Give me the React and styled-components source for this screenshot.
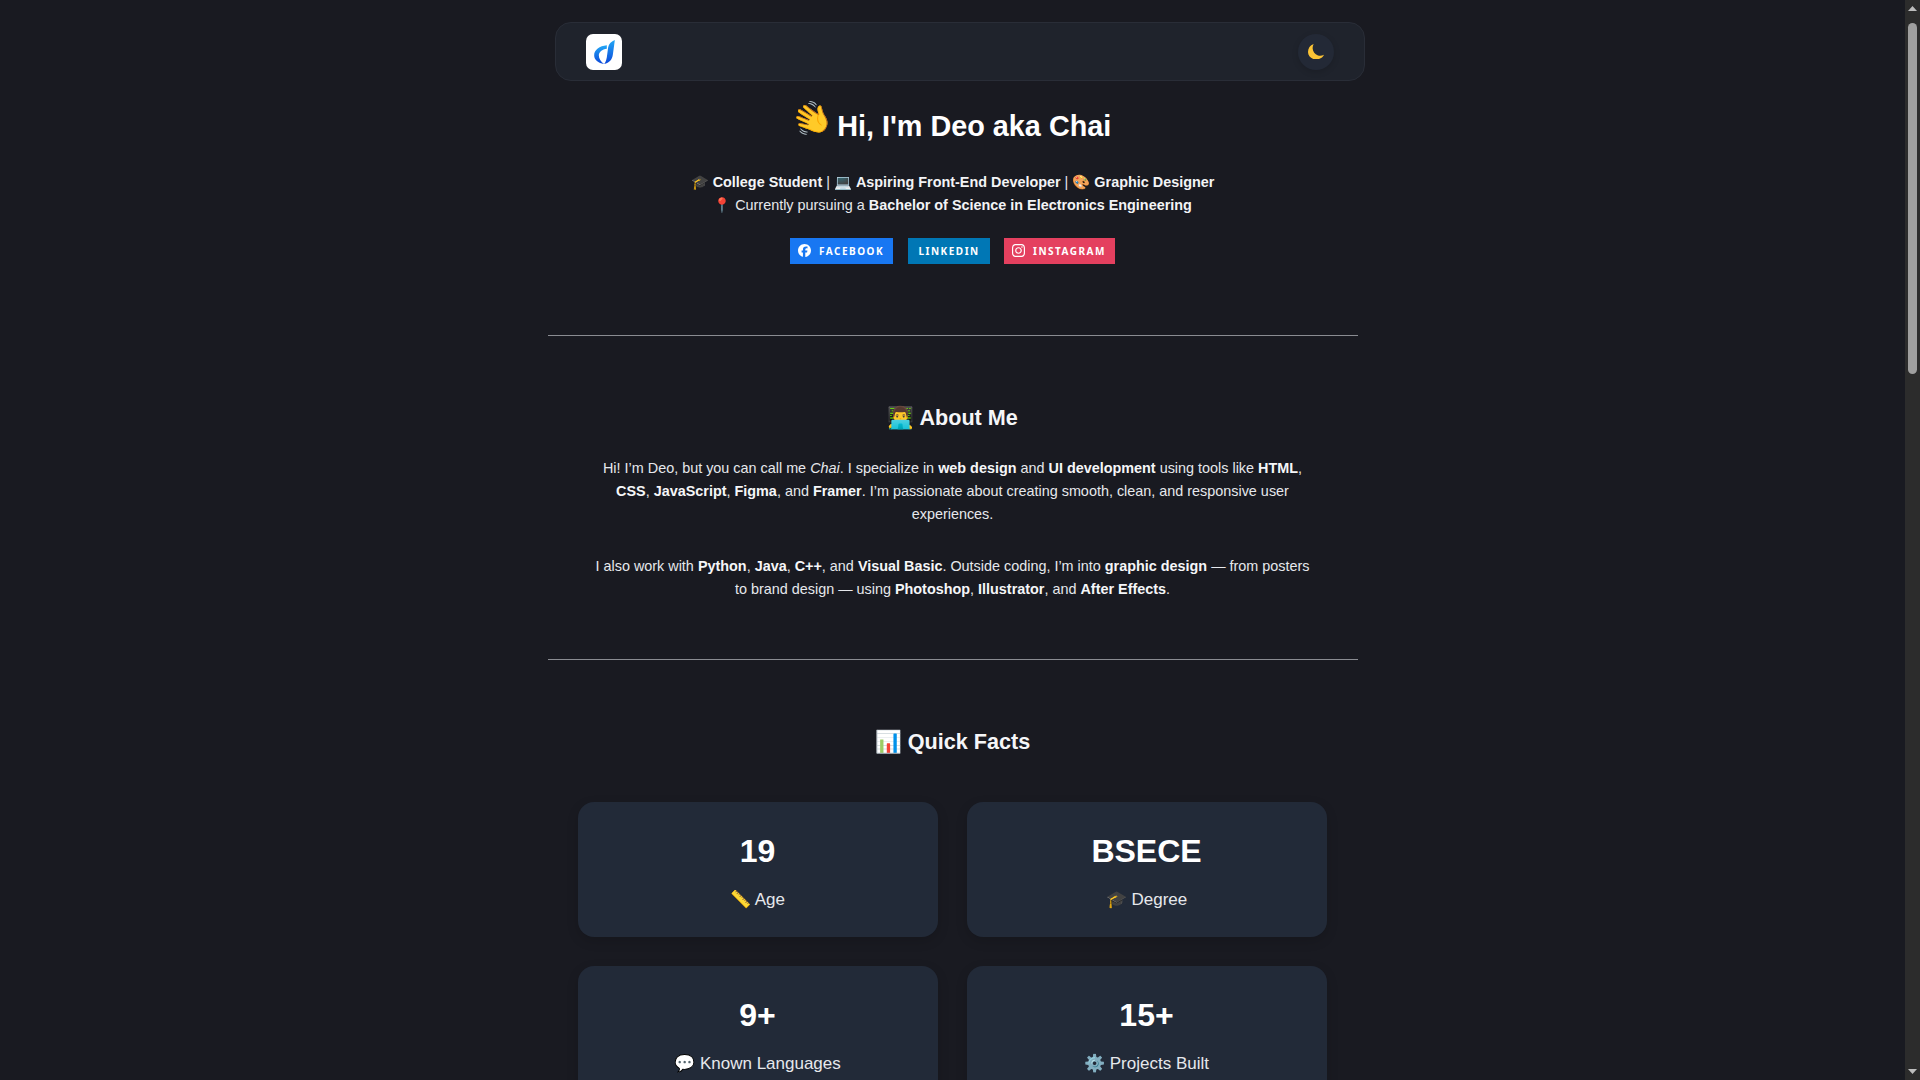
import React from 'react'
import styled, { createGlobalStyle } from 'styled-components'
import { SiFacebook, SiInstagram } from 'react-icons/si'

const Global = createGlobalStyle`
  body {
    margin: 0;
    background: #191a21;
    color: #f0f2f5;
    font-family: "Liberation Sans", Arial, sans-serif;
  }
`

const Page = styled.div`
  box-sizing: border-box;
  min-height: 3190px;
  padding-right: 15px;
  display: flex;
  flex-direction: column;
  align-items: center;
`

// the browser's own scrollbar doesn't show up in the photo, so it's drawn here
const ScrollBar = styled.div`
  position: fixed;
  top: 0;
  right: 0;
  bottom: 0;
  width: 15px;
  background: #2c2c2c;
`

const ScrollThumb = styled.div`
  position: absolute;
  top: 23px;
  left: 3px;
  width: 9px;
  height: 351px;
  border-radius: 5px;
  background: #9f9f9f;
`

const ScrollArrow = styled.svg`
  position: absolute;
  left: 3px;
  ${p => (p.$down ? 'bottom: 6px;' : 'top: 6px;')}
`

const Shell = styled.div`
  width: 810px;
`

const Nav = styled.nav`
  box-sizing: border-box;
  width: 810px;
  height: 59px;
  margin: 22px 0 0 7.5px;
  padding: 0 30px;
  display: flex;
  align-items: center;
  justify-content: space-between;
  background: #1f232c;
  border: 1px solid #292d37;
  border-radius: 16px;
`

const Logo = styled.div`
  width: 36px;
  height: 36px;
  border-radius: 7px;
  background: #fff;
  display: flex;
  align-items: center;
  justify-content: center;
`

const ThemeButton = styled.button`
  width: 36px;
  height: 36px;
  padding: 0;
  border: 0;
  border-radius: 50%;
  background: #232936;
  box-shadow: 0 2px 6px rgba(0, 0, 0, 0.15);
  display: flex;
  align-items: center;
  justify-content: center;
`

const Header = styled.header`
  text-align: center;
`

const Title = styled.h1`
  margin: 22px 0 0;
  padding-right: 2.5px;
  font-size: 28.8px;
  line-height: 44px;
  font-weight: 700;
  color: #fff;
`

const Wave = styled.span`
  display: inline-block;
  font-size: 32px;
  margin-right: -2px;
  position: relative;
  top: -6px;
  transform: rotate(-28deg);
`

const Intro = styled.p`
  margin: 23px 0 0;
  font-size: 14.4px;
  line-height: 23px;
  color: #e6e8ec;
  & b { color: #f3f4f6; }
`

const Badges = styled.div`
  margin-top: 21px;
  display: flex;
  justify-content: center;
  gap: 14.5px;
`

const Badge = styled.a`
  box-sizing: border-box;
  width: ${p => p.$width}px;
  height: 26px;
  padding: 0 0 1px ${p => p.$pad}px;
  display: flex;
  align-items: center;
  gap: 8px;
  background: ${p => p.$bg};
  color: #fff;
  font-family: "Noto Sans", sans-serif;
  font-size: 10px;
  font-weight: 700;
  letter-spacing: 1.5px;
`

const Rule = styled.hr`
  margin: ${p => p.$top}px 0 0;
  border: 0;
  border-top: 1px solid #8a8c92;
`

const Section = styled.section`
  text-align: center;
`

const Heading = styled.h2`
  margin: ${p => p.$top}px 0 0;
  font-size: 21.6px;
  line-height: 32px;
  font-weight: 700;
  color: #f5f6f8;
`

const Para = styled.p`
  margin: ${p => p.$top}px auto 0;
  width: 720px;
  font-size: 14.4px;
  line-height: 23px;
  color: #e6e8ec;
  & b { color: #f5f6f8; }
`

const Facts = styled.div`
  margin: 44px 0 0 30px;
  width: 749px;
  display: grid;
  grid-template-columns: 1fr 1fr;
  gap: 29px;
`

const Fact = styled.div`
  height: 135px;
  padding-top: 31px;
  box-sizing: border-box;
  background: #222a38;
  border-radius: 16px;
  box-shadow: 0 4px 12px rgba(0, 0, 0, 0.15);
  text-align: center;
`

const FactValue = styled.div`
  font-size: 32px;
  line-height: 37px;
  font-weight: 700;
  color: #fff;
`

const FactLabel = styled.div`
  margin-top: 17px;
  font-size: 17px;
  line-height: 26px;
  color: #e6e8ec;
`

const facts = [
  { value: '19', label: '📏 Age' },
  { value: 'BSECE', label: '🎓 Degree' },
  { value: '9+', label: '💬 Known Languages' },
  { value: '15+', label: '⚙️ Projects Built' },
]

export default function App() {
  return (
    <Page>
      <Global />
      <ScrollBar>
        <ScrollArrow width="9" height="5" viewBox="0 0 9 5"><path d="M4.500 0L9 5H0z" fill="#bdbdbd" /></ScrollArrow>
        <ScrollThumb />
        <ScrollArrow $down width="9" height="5" viewBox="0 0 9 5"><path d="M0 0h9L4.500 5z" fill="#bdbdbd" /></ScrollArrow>
      </ScrollBar>
      <Shell>
        <Nav>
          <Logo>
            <svg width="21" height="24" viewBox="0 0 62 72">
              <defs>
                <linearGradient id="logoGrad" x1="0" y1="0" x2="0" y2="1">
                  <stop offset="0" stopColor="#22a7f5" />
                  <stop offset="1" stopColor="#0b47d9" />
                </linearGradient>
              </defs>
              <path d="M38 16C16 18 0 30 0 46c0 14 12 24 30 26-10-6-16-16-16-26 0-10 10-18 24-20z" fill="url(#logoGrad)" />
              <path d="M62 0C52 4 44 10 42 22l-4 30c-2 10-4 16-8 20 16-4 24-14 26-28z" fill="url(#logoGrad)" />
            </svg>
          </Logo>
          <ThemeButton aria-label="theme">
            <svg width="16" height="15.500" viewBox="0 0 48 46">
              <path d="M17 0C6 4 0 13 0 24c0 12 10 22 24 22 11 0 20-5 24-14-6 3-12 4-18 2-10-3-15-12-16-20 0-6 1-10 3-14z" fill="#fcc435" />
            </svg>
          </ThemeButton>
        </Nav>

        <Header>
          <Title><Wave>👋</Wave> Hi, I'm Deo aka Chai</Title>
          <Intro>
            🎓 <b>College Student</b> | 💻 <b>Aspiring Front-End Developer</b> | 🎨 <b>Graphic Designer</b>
            <br />
            📍 Currently pursuing a <b>Bachelor of Science in Electronics Engineering</b>
          </Intro>
          <Badges>
            <Badge $bg="#1877f2" $width={103} $pad={8}><SiFacebook size={13} /> FACEBOOK</Badge>
            <Badge $bg="#0077b5" $width={82} $pad={11}>LINKEDIN</Badge>
            <Badge $bg="#e4405f" $width={111} $pad={8}><SiInstagram size={13} /> INSTAGRAM</Badge>
          </Badges>
        </Header>

        <Rule $top={71} />

        <Section>
          <Heading $top={66}>👨‍💻 About Me</Heading>
          <Para $top={23}>
            Hi! I’m Deo, but you can call me <i>Chai</i>. I specialize in <b>web design</b> and <b>UI development</b> using tools like <b>HTML</b>, <b>CSS</b>, <b>JavaScript</b>, <b>Figma</b>, and <b>Framer</b>. I’m passionate about creating smooth, clean, and responsive user experiences.
          </Para>
          <Para $top={29}>
            I also work with <b>Python</b>, <b>Java</b>, <b>C++</b>, and <b>Visual Basic</b>. Outside coding, I’m into <b>graphic design</b> — from posters to brand design — using <b>Photoshop</b>, <b>Illustrator</b>, and <b>After Effects</b>.
          </Para>
        </Section>

        <Rule $top={58} />

        <Section>
          <Heading $top={66}>📊 Quick Facts</Heading>
          <Facts>
            {facts.map(f => (
              <Fact key={f.label}>
                <FactValue>{f.value}</FactValue>
                <FactLabel>{f.label}</FactLabel>
              </Fact>
            ))}
          </Facts>
        </Section>
      </Shell>
    </Page>
  )
}
